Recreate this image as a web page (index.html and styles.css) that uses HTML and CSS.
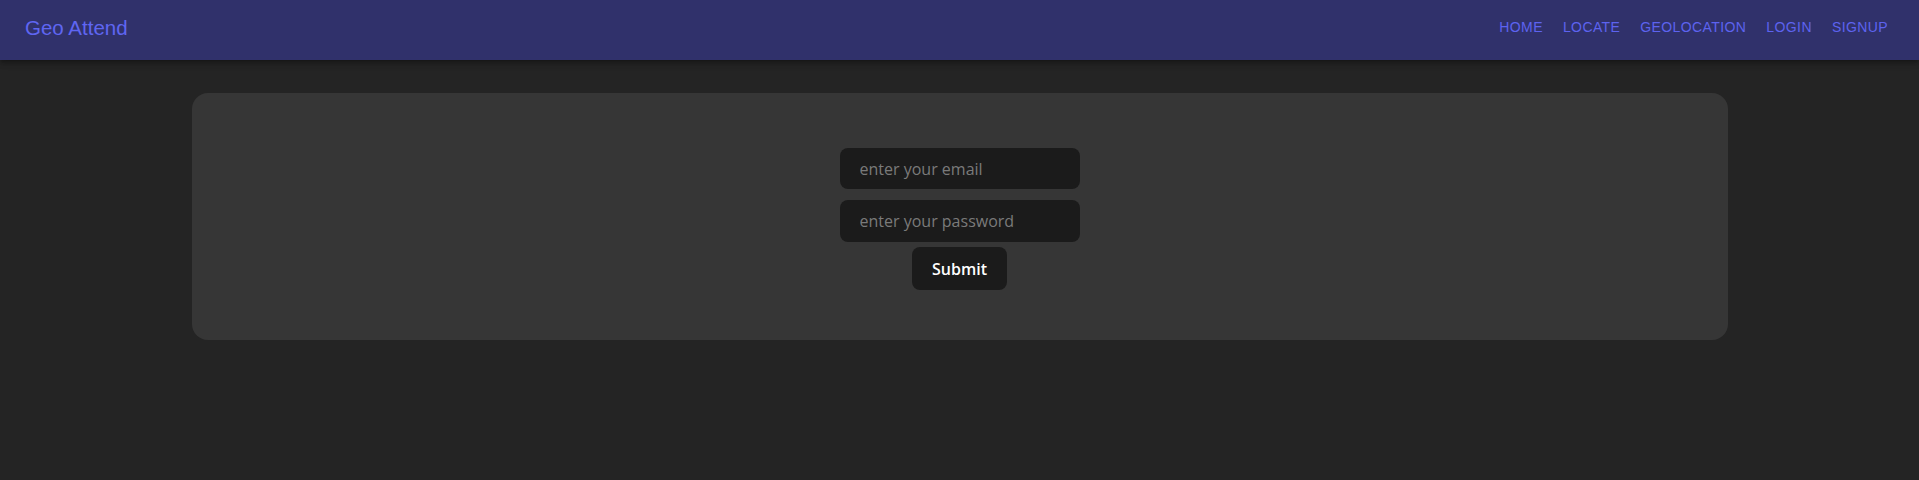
FILE: index.html
```html
<!DOCTYPE html>
<html lang="en">
<head>
<meta charset="utf-8">
<title>Geo Attend</title>
<link rel="stylesheet" href="styles.css">
</head>
<body>
<header class="navbar">
  <a class="brand" href="#">Geo Attend</a>
  <nav class="links">
    <a href="#">HOME</a>
    <a href="#">LOCATE</a>
    <a href="#">GEOLOCATION</a>
    <a href="#">LOGIN</a>
    <a href="#">SIGNUP</a>
  </nav>
</header>
<main class="page">
  <section class="card">
    <form class="login-form">
      <input class="field" type="email" placeholder="enter your email">
      <input class="field field-pass" type="password" placeholder="enter your password">
      <button class="submit" type="button">Submit</button>
    </form>
  </section>
</main>
</body>
</html>
```

FILE: styles.css
```css
* { box-sizing: border-box; }
html, body {
  margin: 0;
  padding: 0;
  background: #242424;
  height: 100%;
}
body {
  font-family: "Open Sans", "Noto Sans", sans-serif;
  color: rgba(255,255,255,0.87);
}
.navbar {
  height: 60px;
  background: #30316b;
  display: flex;
  align-items: center;
  justify-content: space-between;
  padding: 0 31px 0 25px;
  box-shadow: 0 2px 4px -1px rgba(0,0,0,0.25), 0 4px 5px 0 rgba(0,0,0,0.16), 0 1px 10px 0 rgba(0,0,0,0.12);
  position: relative;
}
.brand {
  font-family: "Liberation Sans", Arial, sans-serif;
  font-size: 20.5px;
  color: #5f66f2;
  text-decoration: none;
  margin-top: -4px;
}
.links {
  display: flex;
  gap: 20px;
  margin-top: -7px;
}
.links a {
  font-family: "Liberation Sans", Arial, sans-serif;
  font-size: 14px;
  letter-spacing: 0.4px;
  color: #5d63ef;
  text-decoration: none;
}
.page {
  padding-top: 33px;
}
.card {
  width: 1536px;
  margin: 0 auto;
  background: #363636;
  border-radius: 16px;
  padding: 55px 0 50px;
}
.login-form {
  display: flex;
  flex-direction: column;
  align-items: center;
}
.field {
  width: 240px;
  height: 41px;
  border: none;
  outline: none;
  border-radius: 8px;
  background: #1b1b1b;
  padding: 0 20px;
  font-family: "Open Sans", "Noto Sans", sans-serif;
  font-size: 16px;
  color: #ddd;
}
.field::placeholder { color: #7a7a7a; }
.field-pass { margin-top: 11px; height: 42px; }
.submit {
  margin-top: 5px;
  width: 95px;
  height: 43px;
  border: none;
  border-radius: 8px;
  background: #1b1b1b;
  color: #fff;
  font-family: "Open Sans", "Noto Sans", sans-serif;
  font-weight: 600;
  font-size: 16px;
  padding: 0;
}
```
